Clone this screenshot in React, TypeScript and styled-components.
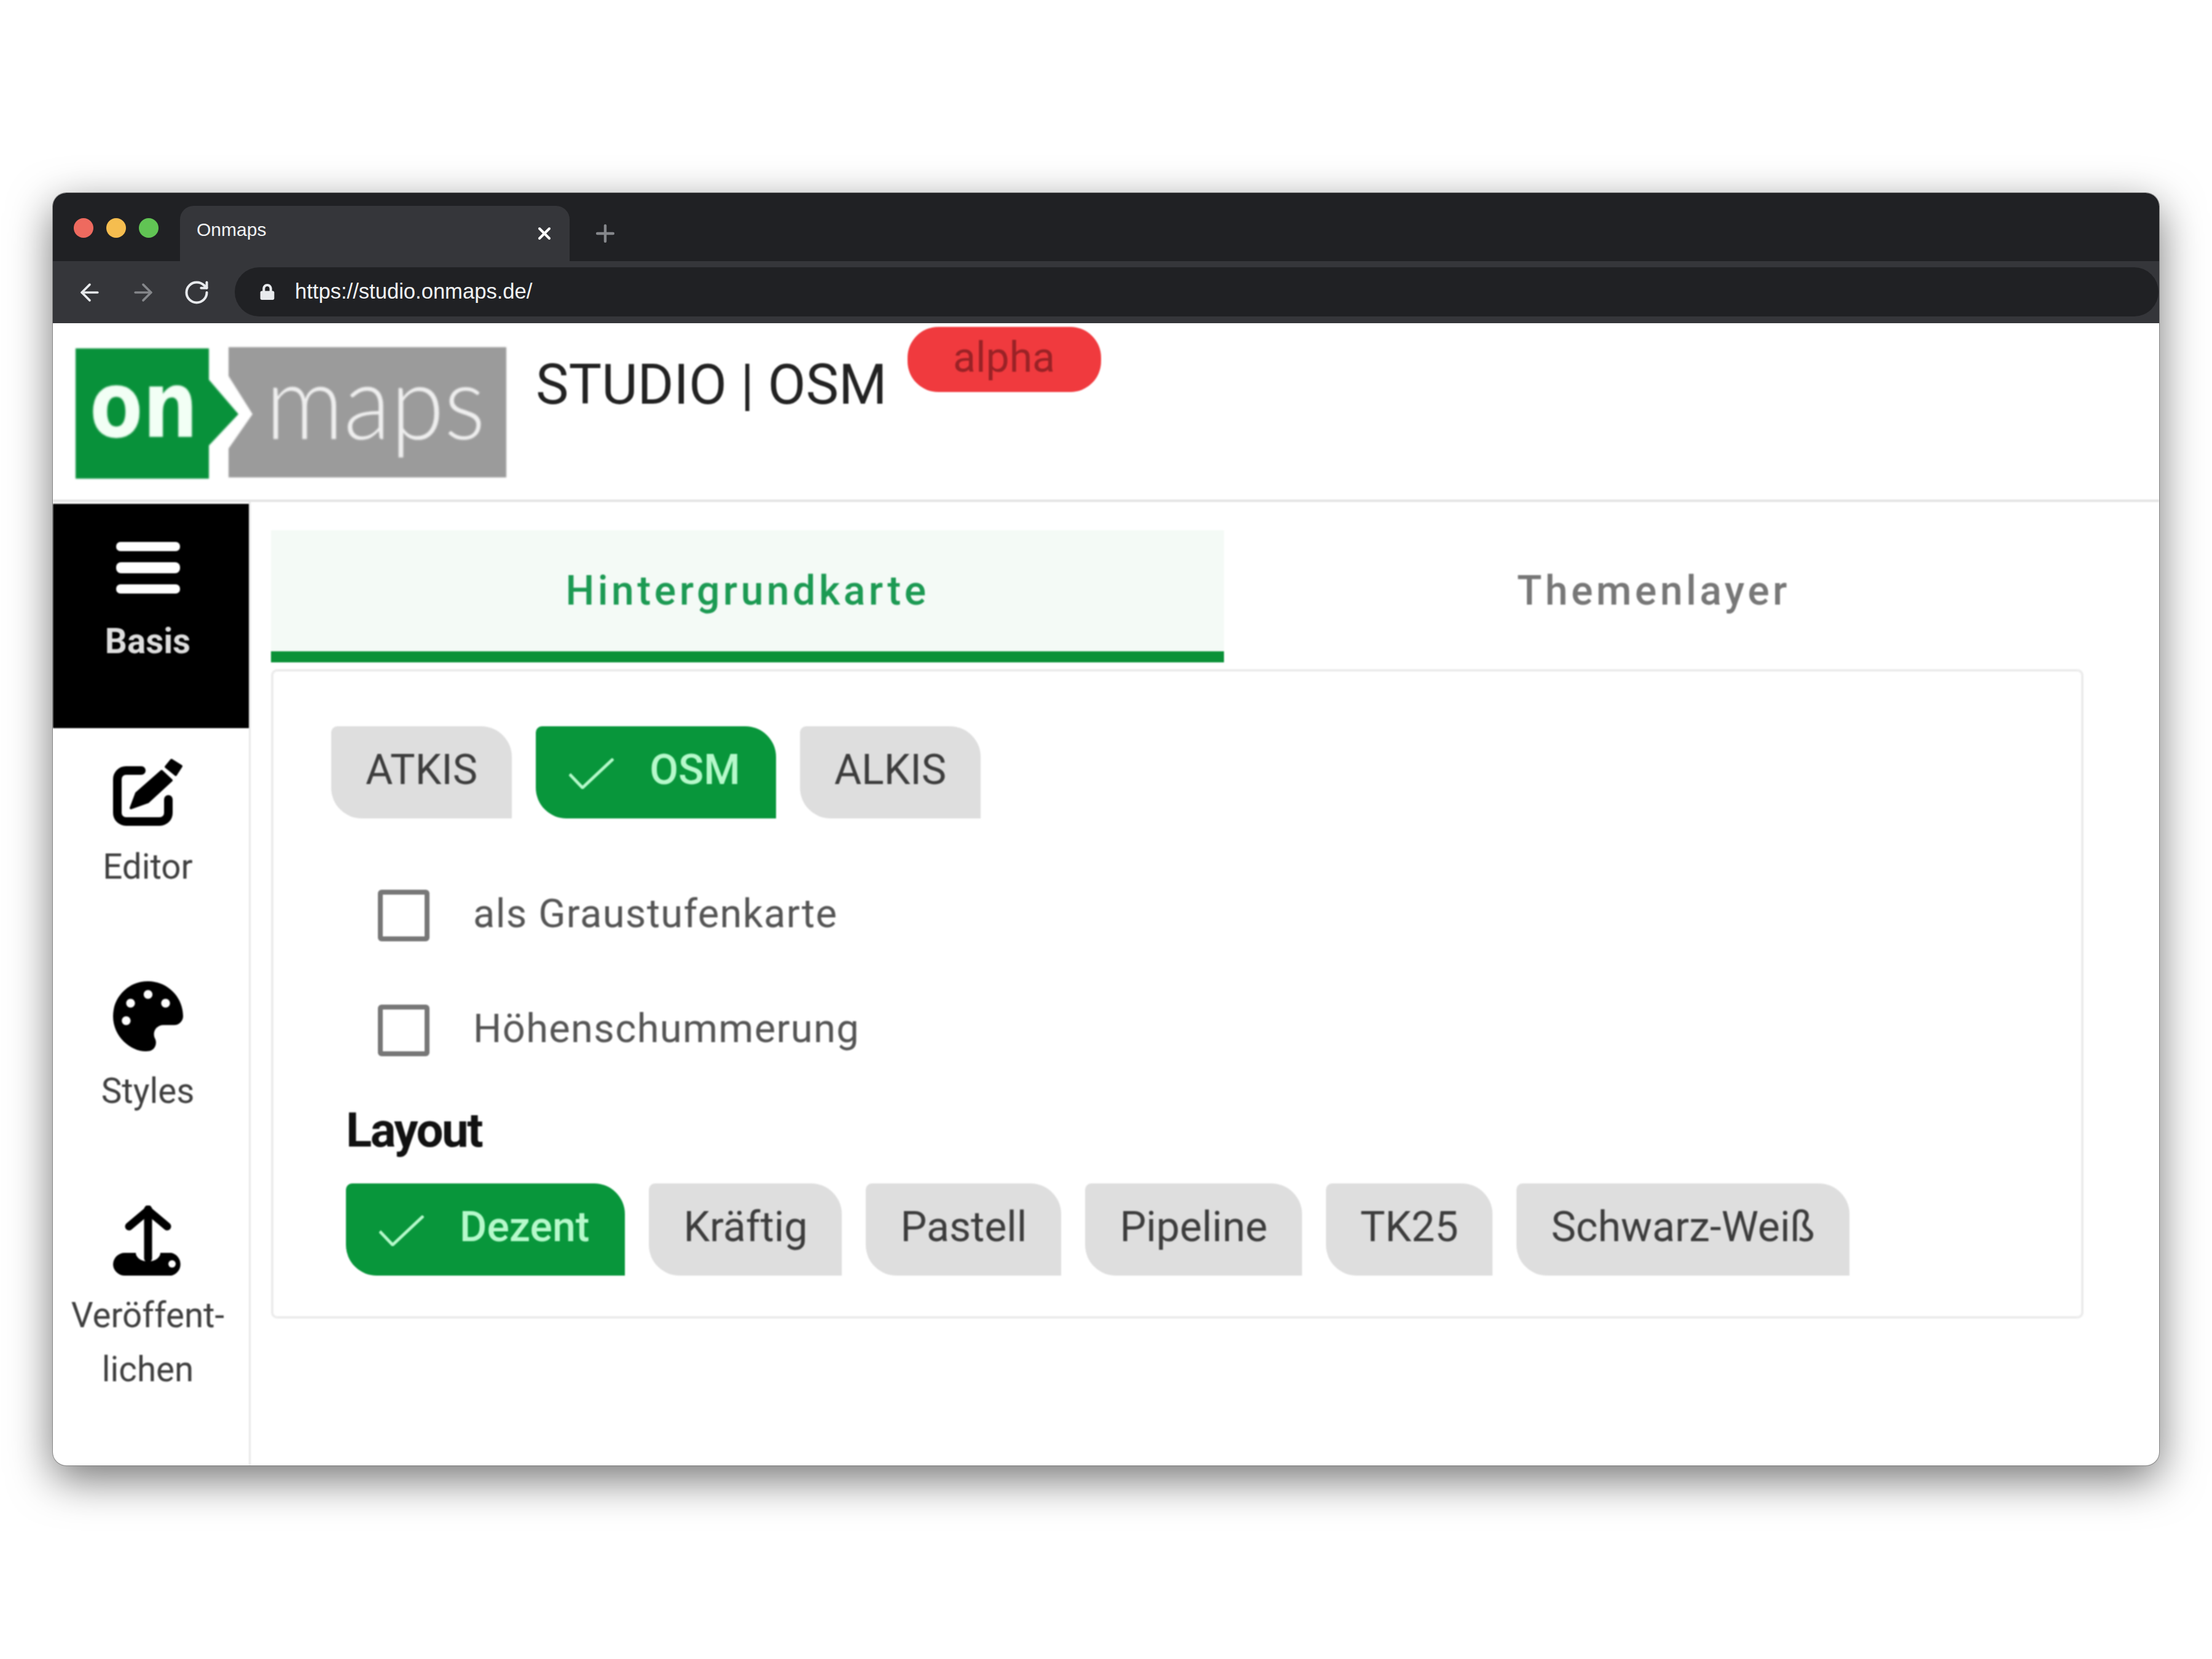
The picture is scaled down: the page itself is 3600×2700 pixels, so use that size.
import React from "react";
import styled, { createGlobalStyle } from "styled-components";
import { ArrowLeft, ArrowRight, Plus, RotateCw, X } from "lucide-react";
import { FaLock, FaPalette } from "react-icons/fa";

const GlobalStyle = createGlobalStyle`
  html, body {
    margin: 0;
    padding: 0;
    background: #fff;
  }
  body {
    font-family: "Roboto", "Liberation Sans", sans-serif;
  }
`;

const Page = styled.div`
  width: 3600px;
  height: 2700px;
  padding: 314px 86px 0 86px;
  box-sizing: border-box;
  overflow: hidden;
`;

const BrowserWindow = styled.div`
  width: 3428px;
  height: 2071px;
  display: flex;
  flex-direction: column;
  border-radius: 22px;
  background: #fff;
  overflow: hidden;
  box-shadow: 0 0 0 1px rgba(110, 110, 110, 0.7), 0 22px 70px rgba(0, 0, 0, 0.55);
`;

const TabStrip = styled.div`
  height: 111px;
  flex: none;
  display: flex;
  align-items: flex-end;
  background: #202124;
`;

const Lights = styled.div`
  width: 207px;
  height: 111px;
  padding: 41px 0 0 34px;
  box-sizing: border-box;
  display: flex;
  gap: 21px;
`;

const Light = styled.span<{ $color: string }>`
  width: 32px;
  height: 32px;
  border-radius: 50%;
  background: ${(p) => p.$color};
`;

const BrowserTab = styled.div`
  width: 634px;
  height: 90px;
  padding: 0 25px 0 27px;
  box-sizing: border-box;
  display: flex;
  align-items: center;
  justify-content: space-between;
  border-radius: 22px 22px 0 0;
  background: #35363a;
  color: #f1f3f4;
  font-family: "Liberation Sans", sans-serif;
  font-size: 30px;
`;

const TabLabel = styled.span`
  margin-bottom: 12px;
`;

const NewTab = styled.div`
  width: 116px;
  height: 90px;
  display: flex;
  align-items: center;
  justify-content: center;
  color: #85878b;
`;

const Toolbar = styled.div`
  height: 101px;
  flex: none;
  display: flex;
  align-items: center;
  background: #35363a;
  color: #e8eaed;
`;

const NavButtons = styled.div`
  width: 296px;
  padding-left: 38px;
  box-sizing: border-box;
  display: flex;
  gap: 43px;
`;

const Omnibox = styled.div`
  flex: 1;
  height: 80px;
  margin: -2px 1px 0 0;
  padding-left: 40px;
  display: flex;
  align-items: center;
  gap: 32px;
  border-radius: 40px;
  background: #202124;
  color: #f1f3f4;
  font-family: "Liberation Sans", sans-serif;
  font-size: 34.6px;
`;

const Content = styled.div`
  flex: 1;
  display: flex;
  flex-direction: column;
  min-height: 0;
  filter: blur(1.3px);
`;

const Header = styled.header`
  height: 291px;
  flex: none;
  box-sizing: border-box;
  display: flex;
  align-items: flex-start;
  padding: 34px 0 0 30px;
  border-bottom: 4px solid #e4e4e4;
`;

const LogoMark = styled.svg`
  width: 715px;
  height: 225px;
  flex: none;
  overflow: visible;
  filter: blur(1px);
`;

const Title = styled.h1`
  margin: 13px 0 0 41px;
  color: #222;
  font-size: 90px;
  font-weight: 400;
  line-height: 108px;
`;

const AlphaBadge = styled.span`
  width: 315px;
  height: 106px;
  margin: -28px 0 0 33px;
  padding-bottom: 6px;
  box-sizing: border-box;
  display: flex;
  align-items: center;
  justify-content: center;
  border-radius: 50px;
  background: #f03a3e;
  color: #9a2226;
  font-size: 68px;
`;

const Body = styled.div`
  flex: 1;
  display: flex;
  min-height: 0;
`;

const Sidebar = styled.nav`
  width: 322px;
  flex: none;
  padding-top: 3px;
  box-sizing: border-box;
  border-right: 3px solid #e8e8e8;
`;

const NavItem = styled.div<{ $active?: boolean }>`
  height: 365px;
  padding: 34px 10px 0 0;
  box-sizing: border-box;
  display: flex;
  flex-direction: column;
  align-items: center;
  background: ${(p) => (p.$active ? "#000" : "transparent")};
  color: ${(p) => (p.$active ? "#dedede" : "#3f3f3f")};
  font-size: 56.5px;
  font-weight: ${(p) => (p.$active ? 700 : 400)};
  line-height: 88px;
  text-align: center;
`;

const NavIcon = styled.div<{ $active?: boolean }>`
  height: 140px;
  margin-bottom: ${(p) => (p.$active ? "6px" : "8px")};
  display: flex;
  align-items: center;
  justify-content: center;
  color: ${(p) => (p.$active ? "#fff" : "#000")};
`;

const Main = styled.main`
  flex: 1;
  padding: 46px 123px 0 33px;
  box-sizing: border-box;
`;

const Tabs = styled.div`
  display: flex;
  height: 215px;
`;

const Tab = styled.div<{ $active?: boolean }>`
  ${(p) => (p.$active ? "width: 1551px;" : "flex: 1;")}
  height: 215px;
  box-sizing: border-box;
  display: flex;
  align-items: center;
  justify-content: center;
  background: ${(p) => (p.$active ? "#f4faf6" : "transparent")};
  border-bottom: 18px solid ${(p) => (p.$active ? "#0b9138" : "transparent")};
  color: ${(p) => (p.$active ? "#1c9a53" : "#777")};
  font-size: 66px;
  font-weight: 500;
  letter-spacing: 5.5px;
`;

const Card = styled.section`
  margin-top: 11px;
  padding: 89px 0 66px;
  border: 4px solid #ececec;
  border-radius: 10px;
`;

const ChipRow = styled.div<{ $indent: number }>`
  display: flex;
  gap: 39px;
  padding-left: ${(p) => p.$indent}px;
`;

const Chip = styled.div<{ $active?: boolean }>`
  height: 150px;
  padding: ${(p) => (p.$active ? "0 58px 8px 54px" : "0 56px 8px")};
  box-sizing: border-box;
  display: flex;
  align-items: center;
  gap: ${(p) => (p.$active ? "58px" : "0")};
  border-radius: 10px 50px 0 50px;
  background: ${(p) => (p.$active ? "#08963b" : "#dedede")};
  color: ${(p) => (p.$active ? "#b6f9cb" : "#3d3d3d")};
  font-size: 68px;
  font-weight: ${(p) => (p.$active ? 500 : 400)};
  white-space: nowrap;
`;

const TickMark = styled.svg`
  width: 73px;
  height: 50px;
  margin-top: 12px;
`;

const CheckList = styled.div`
  margin-top: 61px;
`;

const CheckRow = styled.label`
  height: 187px;
  padding-left: 170px;
  display: flex;
  align-items: center;
  gap: 71px;
  color: #555;
  font-size: 65px;
  letter-spacing: 1.35px;
`;

const CheckBox = styled.span`
  width: 84px;
  height: 84px;
  box-sizing: border-box;
  border: 8px solid #777;
  border-radius: 6px;
  margin-top: 6px;
`;

const SectionTitle = styled.h2`
  height: 84px;
  margin: 31px 0 44px;
  padding-left: 118px;
  color: #111;
  font-size: 78px;
  font-weight: 700;
  letter-spacing: -2.5px;
  line-height: 84px;
`;

const Tick = () => (
  <TickMark viewBox="0 0 73 50" fill="none" stroke="currentColor" strokeWidth="5">
    <path d="M1 26 L22 48 L72 1" />
  </TickMark>
);

const MenuIcon = () => (
  <svg width="104" height="84" viewBox="0 0 104 84" fill="currentColor">
    <rect x="0" y="0" width="104" height="15" rx="7" />
    <rect x="0" y="33" width="104" height="18" rx="8" />
    <rect x="0" y="69" width="104" height="15" rx="7" />
  </svg>
);

const EditIcon = () => (
  <svg width="114" height="112" viewBox="0 0 114 112" fill="none">
    <path
      d="M46 21 H21 a14 14 0 0 0 -14 14 V90 a14 14 0 0 0 14 14 H76 a14 14 0 0 0 14 -14 V68"
      stroke="currentColor"
      strokeWidth="14"
      strokeLinecap="round"
    />
    <path
      d="M29 82 L38 58 L79 22 L95 37 L57 72 Z"
      fill="currentColor"
      stroke="currentColor"
      strokeWidth="4"
      strokeLinejoin="round"
    />
    <path
      d="M86 15 L95 4 L111 14 L102 28 Z"
      fill="currentColor"
      stroke="currentColor"
      strokeWidth="4"
      strokeLinejoin="round"
    />
  </svg>
);

const PublishIcon = () => (
  <svg width="114" height="114" viewBox="0 0 114 114">
    <path d="M0 96 a19 19 0 0 1 19 -19 h18 a20 14 0 0 0 40 0 h18 a19 19 0 0 1 0 37 h-76 a19 19 0 0 1 -19 -18z" fill="currentColor" />
    <circle cx="96" cy="95" r="6" fill="#fff" />
    <path d="M57 6 V86" stroke="currentColor" strokeWidth="13" strokeLinecap="round" />
    <path d="M26 34 L57 8 L88 34" stroke="currentColor" strokeWidth="13" strokeLinecap="round" strokeLinejoin="round" fill="none" />
  </svg>
);

const Logo = () => (
  <LogoMark viewBox="0 0 715 225">
    <path d="M7 7 H224 V58 L272 114 L224 165 V219 H7 Z" fill="#08913a" />
    <path d="M256 5 H708 V217 H256 V170 L295 114 L256 52 Z" fill="#9b9b9b" />
    <text x="30" y="151" fill="#f2fff5" fontFamily="'DejaVu Sans', sans-serif" fontSize="150" fontWeight="700" textLength="176" lengthAdjust="spacingAndGlyphs">
      on
    </text>
    <text x="316" y="155" fill="#efefef" fontFamily="Lato, sans-serif" fontSize="168" fontWeight="300" textLength="358" lengthAdjust="spacingAndGlyphs">
      maps
    </text>
  </LogoMark>
);

const baseLayers = [
  { name: "ATKIS" },
  { name: "OSM", active: true },
  { name: "ALKIS" },
];

const layouts = [
  { name: "Dezent", active: true },
  { name: "Kräftig" },
  { name: "Pastell" },
  { name: "Pipeline" },
  { name: "TK25" },
  { name: "Schwarz-Weiß" },
];

const App = () => {
  return (
    <Page>
      <GlobalStyle />
      <BrowserWindow>
        <TabStrip>
          <Lights>
            <Light $color="#ee6a5f" />
            <Light $color="#f5bd4f" />
            <Light $color="#61c454" />
          </Lights>
          <BrowserTab>
            <TabLabel>Onmaps</TabLabel>
            <X size={32} strokeWidth={3} color="#fff" />
          </BrowserTab>
          <NewTab>
            <Plus size={44} strokeWidth={2.4} />
          </NewTab>
        </TabStrip>
        <Toolbar>
          <NavButtons>
            <ArrowLeft size={44} strokeWidth={2} />
            <ArrowRight size={44} strokeWidth={2} color="#85878b" />
            <RotateCw size={44} strokeWidth={2.2} />
          </NavButtons>
          <Omnibox>
            <FaLock size={26} color="#e8eaed" />
            https://studio.onmaps.de/
          </Omnibox>
        </Toolbar>
        <Content>
          <Header>
            <Logo />
            <Title>STUDIO | OSM</Title>
            <AlphaBadge>alpha</AlphaBadge>
          </Header>
          <Body>
            <Sidebar>
              <NavItem $active>
                <NavIcon $active>
                  <MenuIcon />
                </NavIcon>
                Basis
              </NavItem>
              <NavItem>
                <NavIcon>
                  <EditIcon />
                </NavIcon>
                Editor
              </NavItem>
              <NavItem>
                <NavIcon>
                  <FaPalette size={114} />
                </NavIcon>
                Styles
              </NavItem>
              <NavItem>
                <NavIcon>
                  <PublishIcon />
                </NavIcon>
                Veröffent-
                <br />
                lichen
              </NavItem>
            </Sidebar>
            <Main>
              <Tabs>
                <Tab $active>Hintergrundkarte</Tab>
                <Tab>Themenlayer</Tab>
              </Tabs>
              <Card>
                <ChipRow $indent={94}>
                  {baseLayers.map((layer) => (
                    <Chip key={layer.name} $active={layer.active}>
                      {layer.active && <Tick />}
                      {layer.name}
                    </Chip>
                  ))}
                </ChipRow>
                <CheckList>
                  <CheckRow>
                    <CheckBox />
                    als Graustufenkarte
                  </CheckRow>
                  <CheckRow>
                    <CheckBox />
                    Höhenschummerung
                  </CheckRow>
                </CheckList>
                <SectionTitle>Layout</SectionTitle>
                <ChipRow $indent={118}>
                  {layouts.map((layout) => (
                    <Chip key={layout.name} $active={layout.active}>
                      {layout.active && <Tick />}
                      {layout.name}
                    </Chip>
                  ))}
                </ChipRow>
              </Card>
            </Main>
          </Body>
        </Content>
      </BrowserWindow>
    </Page>
  );
};

export default App;
